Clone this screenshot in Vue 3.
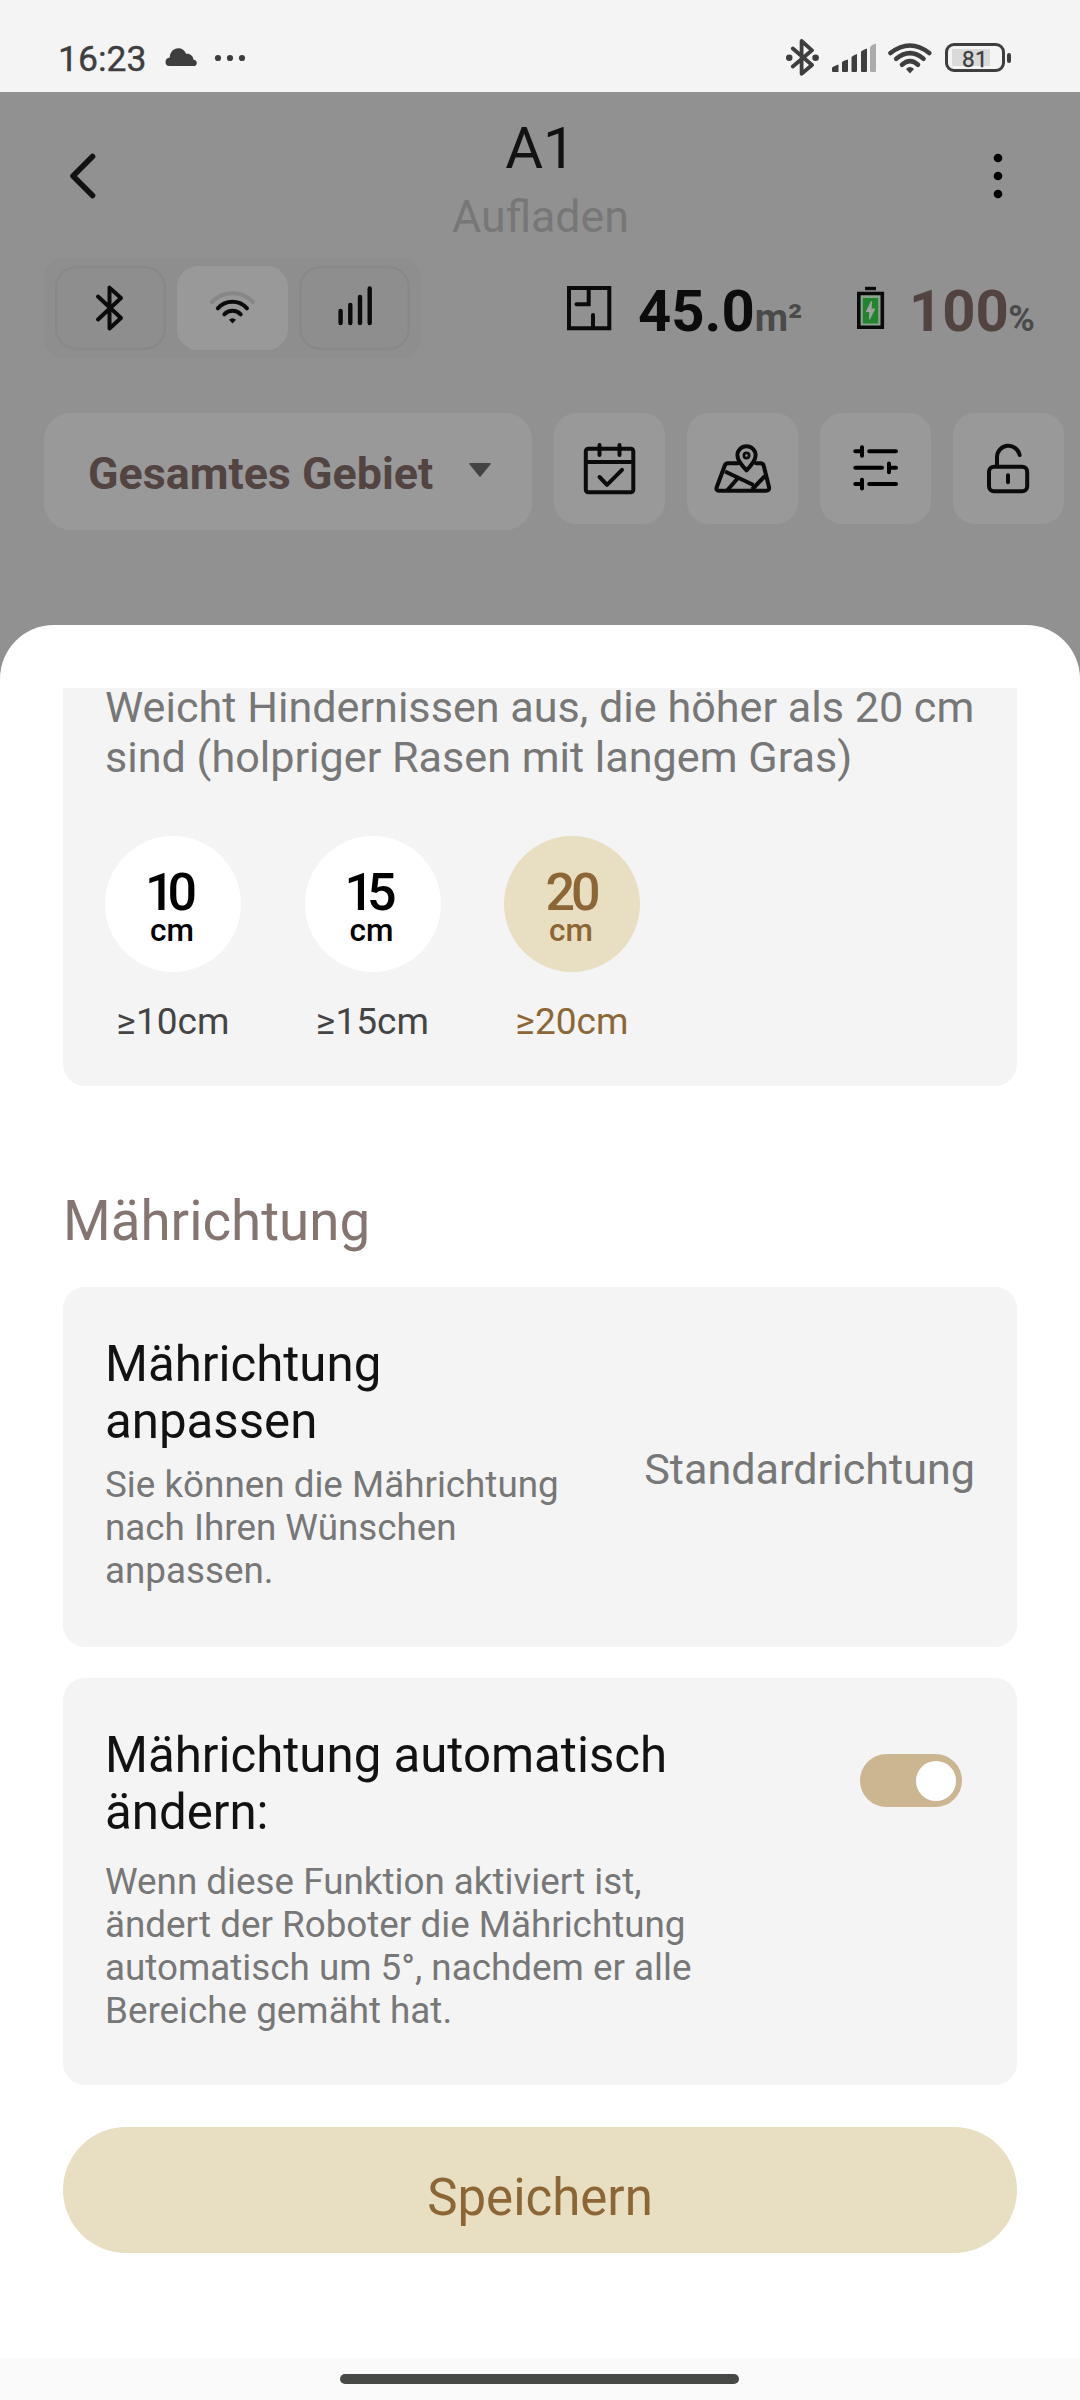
<script setup>
const sizes = [
  { value: '10', label: '≥10cm', narrow: true, active: false },
  { value: '15', label: '≥15cm', narrow: true, active: false },
  { value: '20', label: '≥20cm', narrow: false, active: true },
]
</script>

<template>
  <div class="screen">
    <div class="status">
      <span class="time">16:23</span>
      <svg class="cloud" width="78" height="18" viewBox="165 48 78 18" overflow="visible">
        <path d="M169.500 66a4 4 0 0 1-4-4c0-2.600 1.800-4.300 4.200-4.500C170 52 173.500 48.200 178.300 48.200c3.600 0 6.500 2 7.800 5.500 4.200-.4 7 2.200 7.400 6 2 .2 3.300 1.400 3.300 3.200 0 1.900-1.300 3.100-3.300 3.100z" fill="#3e3e3e" />
        <circle cx="218" cy="58" r="3.100" fill="#3e3e3e" /><circle cx="230" cy="58" r="3.100" fill="#3e3e3e" /><circle cx="242" cy="58" r="3.100" fill="#3e3e3e" />
      </svg>
      <svg class="sysicons" width="146" height="38" viewBox="786 39 146 38">
        <g fill="none" stroke="#3e3e3e" stroke-width="3.800" stroke-linecap="round" stroke-linejoin="round">
          <path d="M792.800 66.500L812 50.300 801.600 41V73.800L812 65 792.800 48.500" />
          <path d="M890.500 53Q910 38 929.200 53" stroke-width="4.600" />
          <path d="M896.200 58.800Q910 47.500 923.500 58.800" stroke-width="4.600" />
          <path d="M902 64.800Q910 57.500 918 64.800" stroke-width="4.600" />
        </g>
        <g fill="#3e3e3e">
          <circle cx="789.200" cy="57.700" r="3.300" /><circle cx="815.600" cy="57.700" r="3.300" />
          <path d="M832 68q0-1.500 6.500-3.500V72H833q-1 0-1-1zM842 62.500q0-1.500 6-3V71q0 1-1 1h-4q-1 0-1-1zM851.500 57.500q0-1.500 5.500-3.500V71q0 1-1 1h-3.500q-1 0-1-1zM861 52q0-1.500 6-3.500V71q0 1-1 1h-4q-1 0-1-1z" />
          <path d="M906 69Q910 65 914 69L910 73.500z" />
        </g>
        <path d="M870 48q0-3 6-4.300V71q0 1-1 1h-4q-1 0-1-1z" fill="#ababab" />
      </svg>
      <div class="batt"><span class="batt-fill"></span><span class="batt-num">81</span></div>
      <span class="batt-nub"></span>
    </div>

    <div class="app">
      <header class="head">
        <svg class="back" width="28" height="48" viewBox="69 152 28 48"><path d="M92.500 156.500L73 176l19.500 19.500" fill="none" stroke="#121212" stroke-width="5.600" stroke-linecap="round" stroke-linejoin="round" /></svg>
        <div class="titles">
          <h1>A1</h1>
          <p>Aufladen</p>
        </div>
        <svg class="more" width="10" height="46" viewBox="993 153 10 46"><circle cx="998" cy="158" r="4.300" /><circle cx="998" cy="176" r="4.300" /><circle cx="998" cy="194" r="4.300" /></svg>
      </header>

      <div class="stats">
        <div class="chips">
          <div class="chip">
            <svg width="111" height="84" viewBox="55 266 111 84"><path d="M98 319.500L121 298 109.500 287.700V328.500L121 318 98 296.500" fill="none" stroke="#0b0b0b" stroke-width="4" stroke-linecap="round" stroke-linejoin="round" /></svg>
          </div>
          <div class="chip on">
            <svg width="111" height="84" viewBox="177 266 111 84">
              <g fill="none" stroke="#0b0b0b" stroke-width="4" stroke-linecap="round">
                <path d="M211.800 302A28.400 28.400 0 0 1 253 302" stroke="#878787" />
                <path d="M217.800 308.300A19.500 19.500 0 0 1 247 308.300" />
                <path d="M224.300 314.300A11.500 11.500 0 0 1 240.700 314.300" />
              </g>
              <path d="M229 319.800Q232.500 316.800 236 319.800L232.500 323.500z" fill="#0b0b0b" />
            </svg>
          </div>
          <div class="chip">
            <svg width="111" height="84" viewBox="299 266 111 84"><path d="M340.600 311V323M350.300 305V323M360 297V323M369.700 288.500V323" stroke="#0b0b0b" stroke-width="4.400" stroke-linecap="round" /></svg>
          </div>
        </div>
        <svg class="area-icon" width="46" height="46" viewBox="566 285 46 46"><g fill="none" stroke="#0b0b0b" stroke-width="4"><path d="M569 288h40.300v40.300H569z" /><path d="M588.700 289V304.200H576.500" stroke-linecap="round" /><path d="M593 315V327" stroke-linecap="round" /></g></svg>
        <div class="stat area"><b>45.0</b><i class="sq">m²</i></div>
        <svg class="charge" width="28" height="44" viewBox="857 286 28 44">
          <path d="M865 286.800h11v3.400h-11z" fill="#0b0b0b" />
          <path d="M858.800 293.500h23.500v33.800h-23.500z" fill="#8aa58c" stroke="#0b0b0b" stroke-width="3.600" />
          <path d="M862.800 298h15.400v25.500h-15.400z" fill="#22842d" />
          <path d="M871.500 301.500L866.500 311.500H870L869.500 319 874.500 309H871z" fill="#a0a0a0" stroke="#a0a0a0" stroke-width="1.200" stroke-linejoin="round" />
        </svg>
        <div class="stat pct"><b>100</b><i>%</i></div>
      </div>

      <div class="tools">
        <div class="select"><span>Gesamtes Gebiet</span><svg width="24" height="16" viewBox="468 462 24 16"><path d="M470 463.800H490L480 476z" fill="#444" stroke="#444" stroke-width="1.500" stroke-linejoin="round" /></svg></div>
        <div class="tool">
          <svg width="111" height="111" viewBox="554 413 111 111"><g fill="none" stroke="#0b0b0b" stroke-width="4" stroke-linecap="round" stroke-linejoin="round"><rect x="585.800" y="448.700" width="47.500" height="43.500" rx="2.500" /><path d="M586 462H633M599.500 445V455M619.500 445V455M599.500 477L607 484.800 622 469.800" /></g></svg>
        </div>
        <div class="tool">
          <svg width="111" height="111" viewBox="687 413 111 111"><g fill="none" stroke="#0b0b0b" stroke-width="4" stroke-linecap="round" stroke-linejoin="round"><path d="M738 463.300H728Q725.500 463.300 724.600 466L716.800 487Q715.500 490.800 719 490.800H766Q769.700 490.800 769 487L763.800 466Q763.200 463.300 760.500 463.300H756" /><path d="M746.500 470.300C741.500 465.300 737.400 460.500 737.400 455.300A9.100 9.100 0 0 1 755.600 455.300C755.600 460.500 751.500 465.300 746.500 470.300z" /><path d="M725 471.500L753.500 485M738 478L727.500 490M765 476L752 489.500" stroke-linecap="butt" /><circle cx="746.500" cy="455.500" r="2.600" stroke-width="2.800" /></g></svg>
        </div>
        <div class="tool">
          <svg width="111" height="111" viewBox="820 413 111 111"><path d="M855.300 451.300H861M862 447.200V455.800M869.200 451.300H896M855.300 467.700H882M889 463.600V472.200M890 467.700H896M855.300 484H861M862 479.800V488.500M869.200 484H896" fill="none" stroke="#000" stroke-width="4" stroke-linecap="round" /></svg>
        </div>
        <div class="tool">
          <svg width="111" height="111" viewBox="953 413 111 111"><g fill="none" stroke="#0b0b0b" stroke-width="4" stroke-linecap="round"><rect x="989" y="466.700" width="38.200" height="24.600" rx="5" /><path d="M997 466V457A11.400 11.400 0 0 1 1019.600 455M1008 475.300V482.200" /></g></svg>
        </div>
      </div>
    </div>

    <section class="sheet">
      <div class="card first">
        <p class="desc">Weicht Hindernissen aus, die höher als 20 cm<br />sind (holpriger Rasen mit langem Gras)</p>
        <div class="sizes">
          <div v-for="s in sizes" :key="s.value" class="size" :class="{ active: s.active, narrow: s.narrow }">
            <div class="disc"><span class="num">{{ s.value }}</span><span class="unit">cm</span></div>
            <span class="cap">{{ s.label }}</span>
          </div>
        </div>
      </div>
      <h2>Mährichtung</h2>
      <div class="card second">
        <div>
          <h3>Mährichtung<br />anpassen</h3>
          <p>Sie können die Mährichtung<br />nach Ihren Wünschen<br />anpassen.</p>
        </div>
        <span class="value">Standardrichtung</span>
      </div>
      <div class="card third">
        <div>
          <h3>Mährichtung automatisch<br />ändern:</h3>
          <p>Wenn diese Funktion aktiviert ist,<br />ändert der Roboter die Mährichtung<br />automatisch um 5°, nachdem er alle<br />Bereiche gemäht hat.</p>
        </div>
        <span class="toggle"><span></span></span>
      </div>
      <button class="save">Speichern</button>
    </section>
    <div class="nav"><span></span></div>
  </div>
</template>

<style>
body { margin: 0; }
</style>

<style scoped>
.screen { width: 1080px; height: 2400px; overflow: hidden; display: flex; flex-direction: column; background: #919191; font-family: Roboto, "Liberation Sans", sans-serif; }
.screen * { box-sizing: border-box; }
h1, h2, h3, p { margin: 0; font-weight: 400; }
svg { display: block; flex: none; }
span, b, i, h1, h2, h3, p { white-space: nowrap; }

.status { height: 92px; flex: none; display: flex; align-items: flex-start; background: #f4f4f4; color: #3e3e3e; }
.time { width: 107px; margin: 37px 0 0 58px; font-size: 35.500px; line-height: 44px; font-weight: 400; -webkit-text-stroke: 0.400px #3e3e3e; }
.cloud { margin-top: 48px; }
.sysicons { margin: 39px 0 0 543px; }
.batt { width: 60px; height: 29px; margin: 43px 0 0 13px; border: 3px solid #3e3e3e; border-radius: 9px; padding: 3px 4px; position: relative; }
.batt-fill { display: block; width: 38px; height: 17px; background: #dadada; }
.batt-num { position: absolute; inset: 1.500px 0 0 0; text-align: center; font-size: 22.500px; line-height: 23px; font-weight: 400; letter-spacing: 0.300px; -webkit-text-stroke: 0.300px #3e3e3e; }
.batt-nub { width: 4px; height: 10px; margin: 53px 0 0 2px; border-radius: 2px; background: #3e3e3e; }

.app { height: 533px; flex: none; }
.head { height: 166px; display: flex; align-items: flex-start; padding: 22px 77px 0 69px; justify-content: space-between; }
.back { margin-top: 38px; }
.more { margin-top: 39px; }
.titles { text-align: center; margin-right: 9px; }
.titles h1 { font-size: 58px; line-height: 68px; color: #121212; }
.titles p { font-size: 44.700px; line-height: 52px; margin-top: 9px; color: #777; }

.stats { height: 100px; margin-left: 44px; display: flex; align-items: flex-start; }
.chips { display: flex; gap: 11px; width: 377px; height: 100px; padding: 8px 11px; border-radius: 20px; background: #8e8e8e; }
.chip { width: 111px; height: 84px; border-radius: 21px; box-shadow: inset 0 0 0 2.500px #888; }
.chip.on { background: #999; box-shadow: none; }
.area-icon { margin: 27px 0 0 145px; }
.stat { height: 68px; margin-top: 19px; line-height: 68px; display: flex; align-items: baseline; color: #0c0c0c; }
.stat b { font-size: 58px; font-weight: 700; }
.stat i { font-style: normal; color: #4a4a4a; }
.stat .sq { font-weight: 700; font-size: 38.500px; }
.area { margin-left: 26px; width: 219px; }
.charge { margin-top: 28px; }
.pct { margin-left: 24px; }
.pct b { color: #514340; }
.pct i { font-weight: 700; font-size: 36px; margin-left: -0.500px; }

.tools { margin: 55px 0 0 44px; display: flex; align-items: flex-start; gap: 22px; }
.select { width: 488px; height: 117px; padding: 3.500px 40px 0 44px; display: flex; align-items: center; justify-content: space-between; border-radius: 27px; background: #999; color: #514441; font-size: 44.800px; font-weight: 700; flex: none; }
.select svg { margin-top: -6.500px; }
.tool { width: 111px; height: 111px; border-radius: 22px; background: #999; flex: none; }

.sheet { height: 1733px; flex: none; padding: 63px 63px 0; background: #fff; border-radius: 54px 54px 0 0; color: #777; }
.card { background: #f4f4f4; border-radius: 22px; padding: 0 42px 0 42px; }
.first { height: 398px; border-radius: 0 0 22px 22px; display: flex; flex-direction: column; }
.desc { font-size: 43.150px; line-height: 50px; margin-top: -5px; }
.sizes { display: flex; gap: 63.500px; margin-top: 53px; }
.size { width: 136px; display: flex; flex-direction: column; align-items: center; color: #444; }
.disc { width: 136px; height: 136px; border-radius: 50%; background: #fff; color: #000; display: flex; flex-direction: column; align-items: center; font-weight: 500; }
.num { font-size: 52px; line-height: 44px; letter-spacing: -4px; margin: 35px 2px 0 0; }
.narrow .num { letter-spacing: -7px; margin-right: 11px; }
.unit { font-size: 31.500px; line-height: 32px; margin-right: 2px; }
.cap { font-size: 37px; line-height: 44px; margin: 28px 0 0 0; }
.size.active { color: #8c6735; }
.active .disc { background: #e8dfc2; color: #8c6735; }
h2 { font-size: 54.700px; line-height: 64px; margin: 103px 0 34px; color: #857470; }
.second { height: 360px; display: flex; justify-content: space-between; padding-top: 49px; }
h3 { font-size: 49.200px; line-height: 57px; color: #121212; }
.card p:not(.desc) { font-size: 36.800px; line-height: 43px; margin-top: 13px; }
.value { font-size: 43.150px; line-height: 50px; margin-top: 109px; }
.third { height: 407px; margin-top: 31px; padding: 49px 55px 0 42px; display: flex; justify-content: space-between; }
.card.third p:not(.desc) { margin-top: 19px; }
.toggle { width: 102px; height: 53px; margin-top: 27px; border-radius: 27px; background: #ccb591; display: flex; justify-content: flex-end; padding: 6.500px 6px; }
.toggle span { width: 40px; height: 40px; border-radius: 50%; background: #fff; }
.save { display: block; width: 954px; height: 126px; margin-top: 42px; padding: 16px 0 0; border: 0; border-radius: 63px; background: #e8dfc2; color: #8c6735; font: 400 51px/60px Roboto, sans-serif; text-align: center; }
.nav { height: 42px; flex: none; background: #fafafa; display: flex; justify-content: center; padding: 16px 2px 0 0; }
.nav span { width: 399px; height: 10px; border-radius: 5px; background: #474947; }
</style>
